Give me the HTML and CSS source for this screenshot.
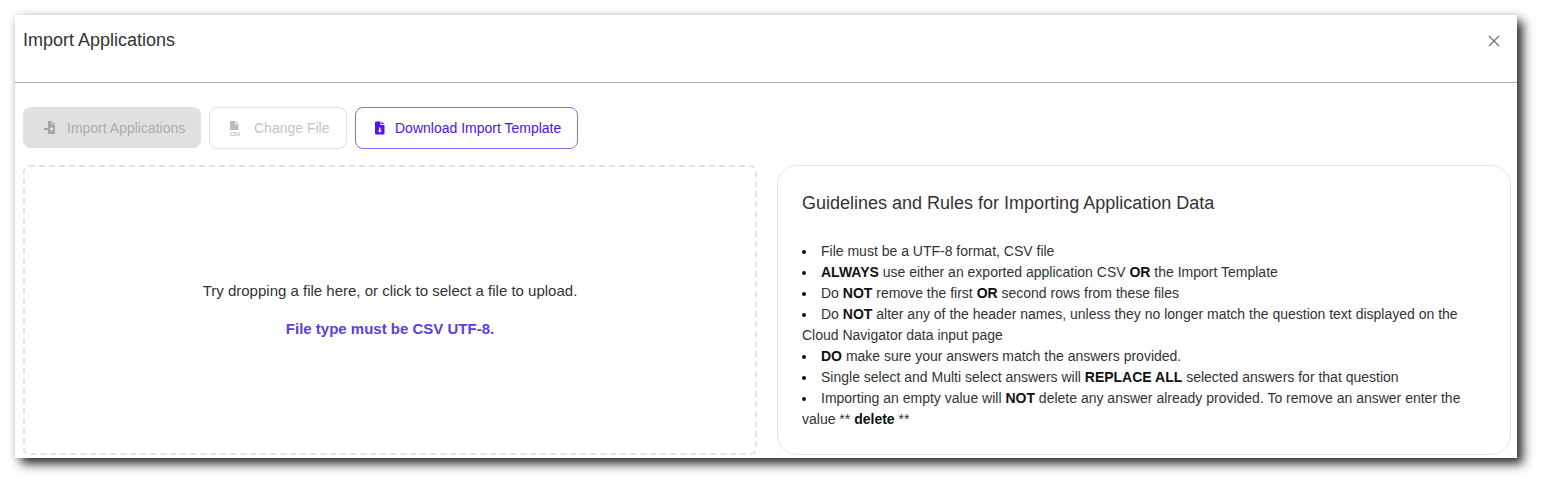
FILE: index.html
```html
<!DOCTYPE html>
<html>
<head>
<meta charset="utf-8">
<title>Import Applications</title>
<link rel="stylesheet" href="styles.css">
</head>
<body>
<div class="modal">
	<div class="modal-head">
		<h2>Import Applications</h2>
		<svg class="close" width="12" height="12" viewBox="0 0 12 12"><path d="M1 1L11 11M11 1L1 11"/></svg>
	</div>
	<div class="modal-body">
		<div class="toolbar">
			<a class="btn btn-solid">
				<svg width="14" height="14" viewBox="0 0 14 14"><path d="M5 0h3.500v3.500H12V13H5V9h3v1.500l2.500-2.500L8 5.500V7H5zM9.500 0L12 2.500H9.500zM1 7h6v2H1z"/></svg>
				Import Applications
			</a>
			<a class="btn btn-line">
				<svg width="14" height="15" viewBox="0 0 14 15"><path d="M0 0h5v3.500h3.500V9H0zM6 0l2.500 2.500H6z"/><text x="0" y="14.500" class="csv">CSV</text></svg>
				Change File
			</a>
			<a class="btn btn-main">
				<svg width="14" height="14" viewBox="0 0 14 14"><path fill-rule="evenodd" d="M3 0.500H7.500V4H11.500V12.500a1 1 0 0 1-1 1H3a1 1 0 0 1-1-1V1.500a1 1 0 0 1 1-1zM8.500 0.500l3 2.500h-3zM6 6.500v3H4.500l2.300 2.300L9 9.500H7.500v-3z"/></svg>
				Download Import Template
			</a>
		</div>
		<div class="panels">
			<div class="drop">
				<p>Try dropping a file here, or click to select a file to upload.</p>
				<p class="hint">File type must be CSV UTF-8.</p>
			</div>
			<div class="rules">
				<h3>Guidelines and Rules for Importing Application Data</h3>
				<ul>
					<li>File must be a UTF-8 format, CSV file</li>
					<li><b>ALWAYS</b> use either an exported application CSV <b>OR</b> the Import Template</li>
					<li>Do <b>NOT</b> remove the first <b>OR</b> second rows from these files</li>
					<li>Do <b>NOT</b> alter any of the header names, unless they no longer match the question text displayed on the Cloud Navigator data input page</li>
					<li><b>DO</b> make sure your answers match the answers provided.</li>
					<li>Single select and Multi select answers will <b>REPLACE ALL</b> selected answers for that question</li>
					<li>Importing an empty value will <b>NOT</b> delete any answer already provided. To remove an answer enter the value ** <b>delete</b> **</li>
				</ul>
			</div>
		</div>
	</div>
</div>
</body>
</html>
```
FILE: styles.css
```css
*{margin:0; padding:0; box-sizing:border-box; list-style:none;}
html,body{background:#fff;}
body{padding:15px 25px 25px 15px; font-family:"Liberation Sans",Arial,sans-serif; font-size:14px; color:#333;}
.modal{width:1502px; height:443px; background:#fff; box-shadow:6px 6px 10px rgba(0,0,0,0.8), 0 0 8px rgba(0,0,0,0.12);}
.modal-head{height:68px; padding:14px 17px 0 8px; border-bottom:1px solid #aca8b8; display:flex; justify-content:space-between; align-items:flex-start;}
.modal-head h2{font-size:18px; font-weight:400; line-height:22px; color:#333;}
.close{margin-top:6px; fill:none; stroke:#777; stroke-width:1.400;}
.modal-body{padding:24px 6px 0 8px;}
.toolbar{display:flex; gap:8px; height:42px;}
.btn{display:flex; align-items:center; height:41px; padding:0 16px 0 20px; border-radius:8px; font-size:14px; white-space:nowrap;}
.btn svg{flex:none; margin-right:10px;}
.btn-solid{width:178px; background:#e0e0e0; color:#adadad; fill:#a6a6a6;}
.btn-line{width:138px; height:42px; border:1px solid #e0e0e0; color:#c4c4c4; fill:#bdbdbd;}
.btn-line .csv{font-size:5px; font-weight:700;}
.btn-main{width:223px; height:42px; border:1px solid #8b6cf5; color:#4f12f0; fill:#4f12f0; padding-left:17px;}
.btn-main svg{margin-right:8px;}
.panels{display:flex; justify-content:space-between; margin-top:16px;}
.drop{width:734px; height:290px; border:2px dashed #e4e4e4; border-radius:6px; display:flex; flex-direction:column; align-items:center; justify-content:center; text-align:center; font-size:15px;}
.drop p{line-height:20px;}
.hint{margin-top:18px; font-weight:700; color:#5a3fe0;}
.rules{width:734px; height:290px; border:1px solid #e3e6ea; border-radius:20px; padding:26px 24px 0;}
.rules h3{font-size:18px; font-weight:400; line-height:22px; margin-bottom:27px;}
.rules ul{line-height:21px;}
.rules li{position:relative; text-indent:19px;}
.rules li:before{content:""; position:absolute; left:0; top:9px; width:4px; height:4px; border-radius:50%; background:#111;}
.rules b{font-weight:700; color:#111;}
```
